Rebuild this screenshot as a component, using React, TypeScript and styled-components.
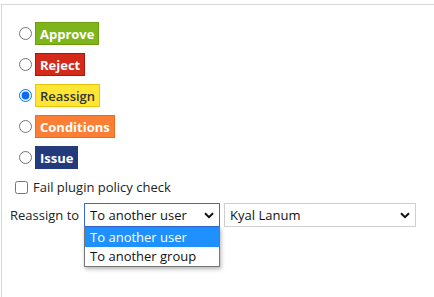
import React from "react";
import styled, { createGlobalStyle } from "styled-components";

const Global = createGlobalStyle`
  html, body { margin: 0; padding: 0; background: #fff; overflow: hidden; }
  body { font-family: "Open Sans", "Noto Sans", sans-serif; font-size: 13px; color: #222; }
`;

const Frame = styled.div`
  margin: 4px 0 0 1px;
  height: calc(100vh - 4px);
  border-top: 1px solid #d6d6d6;
  border-left: 1px solid #d6d6d6;
  box-sizing: border-box;
  padding: 17px 0 0 8px;
`;

const Options = styled.div`
  display: flex;
  flex-direction: column;
  gap: 8px;
`;

const OptionRow = styled.label`
  display: flex;
  align-items: center;
  height: 23px;
`;

const Radio = styled.input.attrs({ type: "radio" })`
  width: 13px;
  height: 13px;
  margin: 0 3px 0 9px;
  accent-color: #0a6cf5;
`;

const badgeColors: Record<string, [string, string, string]> = {
  approve: ["#80b41b", "#6c9c10", "#fff"],
  reject: ["#d32a19", "#a61a0e", "#fff"],
  reassign: ["#ffe635", "#e9c50a", "#333"],
  conditions: ["#fd7e35", "#e86c22", "#fff"],
  issue: ["#233b7a", "#233b7a", "#fff"],
};

const Badge = styled.span<{ $kind: string }>`
  display: inline-flex;
  align-items: center;
  height: 23px;
  box-sizing: border-box;
  padding: 0 4px;
  font-weight: ${(p) => (p.$kind === "reassign" ? 600 : 700)};
  font-size: 13px;
  background: ${(p) => badgeColors[p.$kind][0]};
  border: 1px solid ${(p) => badgeColors[p.$kind][1]};
  color: ${(p) => badgeColors[p.$kind][2]};
`;

const CheckRow = styled.label`
  display: flex;
  align-items: center;
  margin-top: 10px;
  height: 16px;
`;

const Checkbox = styled.input.attrs({ type: "checkbox" })`
  width: 13px;
  height: 13px;
  margin: 0 5px 0 5px;
`;

const AssignRow = styled.div`
  display: flex;
  align-items: center;
  margin-top: 8px;
`;

const AssignLabel = styled.span`
  margin-right: 5px;
`;

const SelectWrap = styled.div`
  position: relative;
`;

const FakeSelect = styled.div<{ $width: number; $focused?: boolean }>`
  display: flex;
  align-items: center;
  justify-content: space-between;
  box-sizing: border-box;
  width: ${(p) => p.$width}px;
  height: 24px;
  padding: 0 5px 0 5px;
  border: 1px solid ${(p) => (p.$focused ? "#3b6bd6" : "#cfcfcf")};
  background: #fff;
  color: #111;
  margin-right: 4px;
`;

const Dropdown = styled.div`
  position: absolute;
  top: 24px;
  left: 0;
  width: 136px;
  box-sizing: border-box;
  border: 1px solid #767676;
  background: #fff;
  box-shadow: 1px 2px 4px rgba(0, 0, 0, 0.3);
`;

const Option = styled.div<{ $active?: boolean }>`
  height: 19px;
  line-height: 19px;
  padding-left: 5px;
  background: ${(p) => (p.$active ? "#1e90ff" : "#fff")};
  color: ${(p) => (p.$active ? "#fff" : "#111")};
`;

const Chevron = () => (
  <svg width="10" height="7" viewBox="0 0 10 7">
    <path d="M1 1.3 L5 5.2 L9 1.3" fill="none" stroke="#111" strokeWidth="2" />
  </svg>
);

export default function App() {
  const items: [string, string][] = [
    ["approve", "Approve"],
    ["reject", "Reject"],
    ["reassign", "Reassign"],
    ["conditions", "Conditions"],
    ["issue", "Issue"],
  ];
  return (
    <>
      <Global />
      <Frame>
        <Options>
          {items.map(([k, t]) => (
            <OptionRow key={k}>
              <Radio name="action" defaultChecked={k === "reassign"} />
              <Badge $kind={k}>{t}</Badge>
            </OptionRow>
          ))}
        </Options>
        <CheckRow>
          <Checkbox />
          Fail plugin policy check
        </CheckRow>
        <AssignRow>
          <AssignLabel>Reassign to</AssignLabel>
          <SelectWrap>
            <FakeSelect $width={136} $focused>
              <span>To another user</span>
              <Chevron />
            </FakeSelect>
            <Dropdown>
              <Option $active>To another user</Option>
              <Option>To another group</Option>
            </Dropdown>
          </SelectWrap>
          <FakeSelect $width={192}>
            <span>Kyal Lanum</span>
            <Chevron />
          </FakeSelect>
        </AssignRow>
      </Frame>
    </>
  );
}
